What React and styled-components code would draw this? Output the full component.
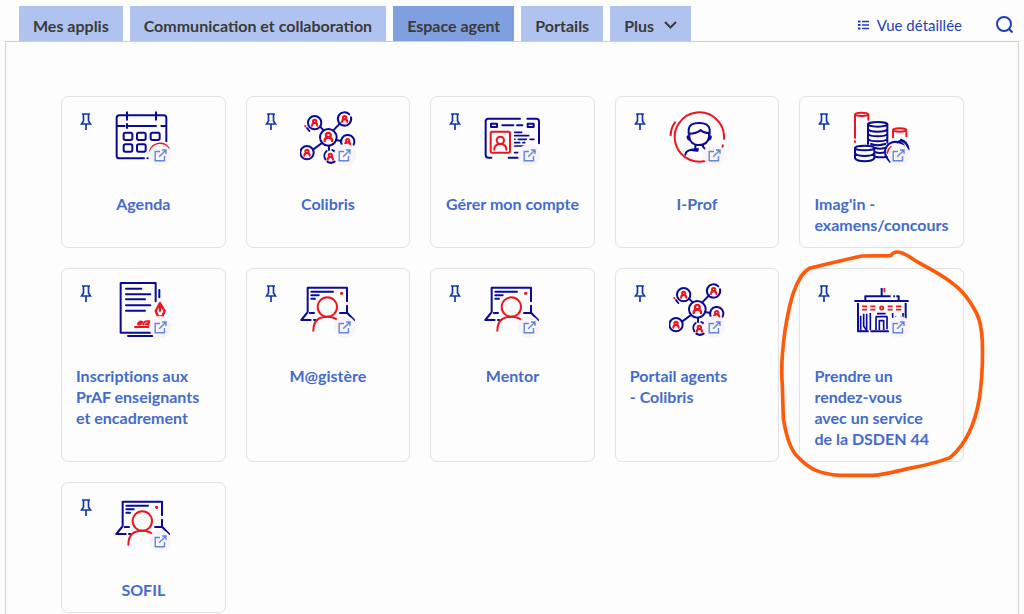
import React, { useState } from "react";
import styled, { createGlobalStyle } from "styled-components";

const GlobalStyle = createGlobalStyle`
  * {
    box-sizing: border-box;
  }
  body {
    margin: 0;
    background: #fdfdfd;
    font-family: Lato, "Open Sans", sans-serif;
    font-size: 16px;
    font-variant-ligatures: none;
  }
  button {
    font-family: inherit;
    font-size: inherit;
    border: none;
    cursor: pointer;
  }
`;

const Page = styled.div`
  display: flex;
  flex-direction: column;
  min-height: 100vh;
  padding: 6px 5px 0;
`;
const Header = styled.header`
  display: flex;
  justify-content: space-between;
  align-items: center;
  padding: 0 6px 0 14px;
`;
const Tabs = styled.nav`
  display: flex;
  gap: 7px;
`;
const Tab = styled.button`
  display: flex;
  align-items: center;
  gap: 10px;
  height: 35px;
  padding: 3px 14px 0;
  font-weight: 700;
  color: #3a3a3a;
  white-space: nowrap;
  background: ${(props) => (props.$active ? "#809fdf" : "#b0c3ee")};
`;
const Tools = styled.div`
  display: flex;
  align-items: center;
  gap: 34px;
`;
const ToolButton = styled.button`
  display: flex;
  align-items: center;
  gap: 8px;
  padding: 2px 0 0;
  font-size: 15px;
  color: #1f3fb5;
  background: none;
`;
const Panel = styled.main`
  flex: 1;
  border: 1px solid #cfcfcf;
  border-bottom: none;
  padding: 54px 54px 0 55px;
`;
const Grid = styled.div`
  display: grid;
  grid-template-columns: repeat(5, 1fr);
  gap: 20px;
`;
const Card = styled.article`
  position: relative;
  display: flex;
  flex-direction: column;
  align-items: center;
  padding: 13px 14px 12px;
  border: 1px solid #e2e2e2;
  border-radius: 7px;
`;
const CardTop = styled.div`
  display: grid;
  grid-template-columns: 1fr 56px 1fr;
  align-items: start;
  width: 100%;
`;
const PinButton = styled.button`
  justify-self: start;
  padding: 2px 4px;
  line-height: 0;
  background: none;
`;
const Picture = styled.div`
  position: relative;
  height: 56px;
`;
const Badge = styled.span`
  position: absolute;
  right: 0;
  bottom: 0;
  display: flex;
  align-items: center;
  justify-content: center;
  width: 22px;
  height: 22px;
  border-radius: 50%;
  background: rgba(248, 244, 248, 0.96);
`;
const CardTitle = styled.a`
  align-self: ${(props) => (props.$left ? "flex-start" : "center")};
  margin-top: 27px;
  line-height: 21px;
  font-weight: 700;
  color: #446bcc;
  text-decoration: none;
  white-space: pre;
`;
const Marker = styled.svg`
  position: absolute;
  left: -30px;
  top: -24px;
  z-index: 1;
  pointer-events: none;
`;

const BLUE = "#0a0a96";
const RED = "#ec1420";

const Drawing = ({ viewBox, children }) => (
  <svg
    width="56"
    height="56"
    viewBox={viewBox}
    fill="none"
    stroke={BLUE}
    strokeWidth="6"
    strokeLinecap="round"
    strokeLinejoin="round"
    aria-hidden="true"
  >
    {children}
  </svg>
);

const Calendar = () => (
  <Drawing viewBox="165 60 168 168">
    <path d="M319 154V84q0-8-8-8H178q-8 0-8 8V197q0 8 8 8h74M262 205h1M201 67v22M288 67v22M172 108h22M206 108h82M304 108h14M201 102v12" />
    <rect x="191" y="128" width="26" height="22" rx="5" />
    <rect x="231" y="128" width="26" height="22" rx="5" />
    <rect x="272" y="128" width="27" height="22" rx="5" />
    <rect x="191" y="163" width="26" height="22" rx="5" />
    <rect x="231" y="163" width="26" height="22" rx="5" />
    <path d="M270 183a31 31 0 0 1 56-8" stroke={RED} />
  </Drawing>
);

const Person = ({ x, y, big }) => (
  <g
    transform={`translate(${x} ${y}) scale(${big ? 1.4 : 1})`}
    stroke={RED}
    strokeWidth={big ? 5 : 6}
  >
    <circle cx="0" cy="-4" r="5" />
    <path d="M-8 9q0-8 8-8t8 8" />
  </g>
);

const Network = () => (
  <Drawing viewBox="30 30 168 168">
    <path d="M90 80l9 9M150 70l-18 19M70 148l26-19M138 120l16 3M117 137v13" />
    <circle cx="115" cy="112" r="25" />
    <circle cx="74" cy="68" r="20" />
    <path d="M178 43a20 20 0 1 0 5 9" />
    <circle cx="51" cy="158" r="20" />
    <path d="M160 140a20 20 0 1 1 31-6" />
    <path d="M110 153a19 19 0 0 0-4 25M112 185a20 20 0 0 0 22 0M127 150l8 5" />
    <path d="M51 84l7 9" />
    <path d="M46 78v1" stroke={RED} />
    <Person x={115} y={111} big />
    <Person x={74} y={68} />
    <Person x={164} y={57} />
    <Person x={51} y={158} />
    <Person x={173} y={126} />
    <Person x={121} y={170} />
  </Drawing>
);

const IdCard = () => (
  <Drawing viewBox="27 30 168 168">
    <path d="M49 173h-9q-8 0-8-8V64q0-8 8-8h95M157 56h27q8 0 8 8v66M101 173h30M82 76h33M126 76h16" />
    <rect x="48" y="71" width="18" height="10" />
    <rect x="158" y="71" width="18" height="10" />
    <path d="M119 97h21M119 107h42M119 118h1M130 118h24M165 118h12M119 128h15M144 128h5M119 138h32M119 158h12" strokeWidth="5" />
    <g stroke={RED}>
      <rect x="47" y="95" width="58" height="63" rx="4" />
      <circle cx="76" cy="121" r="11" />
      <path d="M58 149q0-17 18-17t18 17" />
    </g>
  </Drawing>
);

const Profile = () => (
  <Drawing viewBox="27 30 168 168">
    <g stroke={RED}>
      <path d="M192 116a74 74 0 1 0-40 61" />
      <path d="M45 67q-13 18-13 39M187 141l2-5" />
    </g>
    <path d="M86 101V88q2-19 31-19t32 19v13M86 101q25 0 36-11q8 9 27 9M88 101v10q3 24 29 24t30-24v-9M86 108q-5 0-3 6t7 5M149 108q5 0 3 6t-7 5M106 134v13h8M129 134v6l7 8M106 148q-28 1-30 16M95 150q12 3 18 2" />
  </Drawing>
);

const Coins = () => (
  <Drawing viewBox="192 60 168 168">
    <g stroke={RED}>
      <ellipse cx="215" cy="73" rx="20" ry="5" />
      <path d="M195 76v67M235 76v13M195 154v2" />
      <ellipse cx="329" cy="120" rx="20" ry="5" />
      <path d="M309 124v18M349 124v15M303 171q-8 5-10 17" />
    </g>
    <ellipse cx="263" cy="103" rx="29" ry="7" />
    <path d="M234 103v59M292 103v55M234 118q5 7 29 7t29-7M234 132q5 7 29 7t29-7M234 147q5 7 29 7t29-7M243 162q17 7 43 0M256 174q14 4 28 0M256 187q14 4 29 0M256 200q18 4 34 0" />
    <ellipse cx="224" cy="174" rx="29" ry="7" />
    <path d="M195 174v31q5 9 29 9t29-9v-31M195 190q5 8 29 8t29-8" />
    <path d="M300 215q-19-18-14-37q7-21 29-23q20 0 27 12M322 158q7-7 15-5q17 7 18 27M333 149q20 6 23 29" />
  </Drawing>
);

const Contract = () => (
  <Drawing viewBox="165 54 168 168">
    <path d="M287 112V57H182V206H271M198 74h46M198 91h73M198 106h57M198 124h73M198 140h57M204 216h73M298 78v22" />
    <g stroke={RED}>
      <path d="M300 117l-13 24 7 16h13l7-16zM300 122v18" strokeWidth="7" />
      <path d="M225 189h38q8-2 7-8h-13M234 181q3-11 12-8-1 7-9 9M250 181q1-12 18-9 1 6-10 9" />
      <path d="M289 216h8M308 216h5" strokeWidth="4" />
    </g>
  </Drawing>
);

const Laptop = () => (
  <Drawing viewBox="30 24 168 168">
    <path d="M53 113V41H171V82M171 95v21M64 53h65M64 64h22M64 74h11M51 117L34 138H62M72 138h4M150 117h22L192 138M59 117h13" />
    <g stroke={RED}>
      <circle cx="112" cy="99" r="29" />
      <path d="M70 170q0-42 42-42q18 0 29 9" />
      <circle cx="155" cy="58" r="2" fill={RED} />
    </g>
  </Drawing>
);

const Building = () => (
  <Drawing viewBox="252 114 168 168">
    <g strokeLinecap="butt">
      <path d="M253 171H416M286 170V157H362M370 157h5M379 157h7V170M335 132V157M264 177V262M407 177V223M262 262H296M301 262H357" />
      <path d="M272 215V260M281 209V246L290 260V209M301 207V258M321 209H347M317 218H351V256M318 218V258M328 258V230H341V258M368 207V222M375 217l4 3M390 217l4 3M399 207V222" strokeWidth="5" />
      <g stroke={RED} strokeWidth="5">
        <path d="M343 132V145M276 187H291M276 197H291M301 187H316M301 197H316M353 187H368M353 197H368M378 187H394M378 197H394" />
        <circle cx="335" cy="192" r="5" />
      </g>
    </g>
  </Drawing>
);

const PinIcon = () => (
  <svg width="12" height="19" viewBox="0 0 12 19" fill="none" stroke="#1238a8" strokeWidth="2" aria-hidden="true">
    <path d="M2 2h8M3.5 2v7L1.5 12h9L8.5 9V2M6 12v6" strokeWidth="1.7" />
  </svg>
);

const ExternalIcon = () => (
  <svg width="13" height="13" viewBox="0 0 13 13" fill="none" stroke="#5f88d8" strokeWidth="1.4" aria-hidden="true">
    <path d="M6 2.5H1.2v9.3h9.3V7M8 1h4v4M12 1L5.2 7.8" />
  </svg>
);

const ChevronIcon = () => (
  <svg width="13" height="8" viewBox="0 0 13 8" fill="none" stroke="#3a3a3a" strokeWidth="2" aria-hidden="true">
    <path d="M1 1l5.5 5.5L12 1" />
  </svg>
);

const ListIcon = () => (
  <svg width="11" height="10" viewBox="0 0 11 10" fill="none" stroke="#1f3fb5" aria-hidden="true">
    <path d="M0 1.5h2.5M0 5h2.5M0 8.5h2.5" strokeWidth="2" />
    <path d="M4 1.5h7M4 5h7M4 8.5h7" strokeWidth="1.4" />
  </svg>
);

const SearchIcon = () => (
  <svg width="17" height="17" viewBox="0 0 17 17" fill="none" stroke="#1f3fb5" strokeWidth="2" aria-hidden="true">
    <circle cx="8" cy="8" r="7" />
    <path d="M13 13l3.5 3.5" />
  </svg>
);

const tabs = ["Mes applis", "Communication et collaboration", "Espace agent", "Portails"];

const apps = [
  { title: "Agenda", icon: Calendar },
  { title: "Colibris", icon: Network },
  { title: "Gérer mon compte", icon: IdCard },
  { title: "I-Prof", icon: Profile },
  { title: "Imag'in -\nexamens/concours", icon: Coins, left: true },
  { title: "Inscriptions aux\nPrAF enseignants\net encadrement", icon: Contract, left: true },
  { title: "M@gistère", icon: Laptop },
  { title: "Mentor", icon: Laptop },
  { title: "Portail agents\n- Colibris", icon: Network, left: true },
  {
    title: "Prendre un\nrendez-vous\navec un service\nde la DSDEN 44",
    icon: Building,
    left: true,
    marked: true,
  },
  { title: "SOFIL", icon: Laptop },
];

function AppCard({ app }) {
  const Icon = app.icon;

  return (
    <Card>
      <CardTop>
        <PinButton aria-label="Épingler">
          <PinIcon />
        </PinButton>
        <Picture>
          <Icon />
          <Badge>
            <ExternalIcon />
          </Badge>
        </Picture>
      </CardTop>
      <CardTitle href="#" $left={app.left}>
        {app.title}
      </CardTitle>
      {app.marked && (
        <Marker width="230" height="240" viewBox="0 0 690 720" fill="none" aria-hidden="true">
          <path
            d="M362 32L275 33Q190 52 118 70C75 95 58 180 46 250C36 320 32 370 37 420L40 520C48 570 58 610 80 632C120 675 150 687 210 691H310C350 688 380 678 430 668C480 658 510 650 540 638C585 600 615 540 628 460C640 380 638 330 637 290C635 250 632 230 620 205C590 150 570 130 530 102C480 68 445 55 425 40C400 22 375 12 362 32"
            stroke="#ff5a0a"
            strokeWidth="11"
            strokeLinecap="round"
            strokeLinejoin="round"
          />
        </Marker>
      )}
    </Card>
  );
}

function App() {
  const [active, setActive] = useState("Espace agent");

  return (
    <>
      <GlobalStyle />
      <Page>
        <Header>
          <Tabs>
            {tabs.map((tab) => (
              <Tab key={tab} $active={tab === active} onClick={() => setActive(tab)}>
                {tab}
              </Tab>
            ))}
            <Tab>
              Plus
              <ChevronIcon />
            </Tab>
          </Tabs>
          <Tools>
            <ToolButton>
              <ListIcon />
              Vue détaillée
            </ToolButton>
            <ToolButton aria-label="Rechercher">
              <SearchIcon />
            </ToolButton>
          </Tools>
        </Header>
        <Panel>
          <Grid>
            {apps.map((app) => (
              <AppCard key={app.title} app={app} />
            ))}
          </Grid>
        </Panel>
      </Page>
    </>
  );
}

export default App;
